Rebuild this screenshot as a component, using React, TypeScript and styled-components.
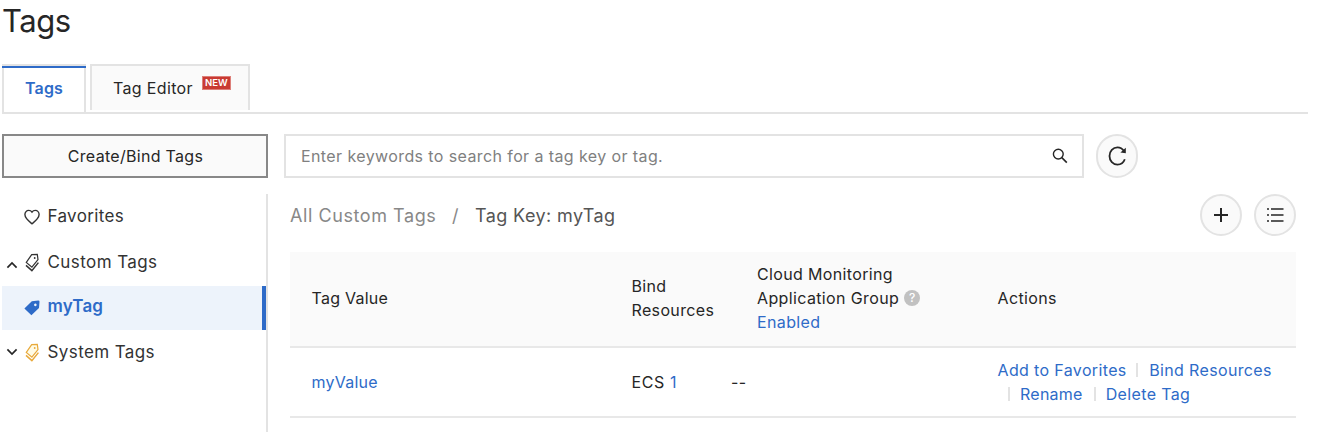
import React from "react";
import styled, { createGlobalStyle } from "styled-components";

const Global = createGlobalStyle`
  * { box-sizing: border-box; }
  body {
    margin: 0;
    background: #fff;
    color: #262626;
    font-family: Inter, "Liberation Sans", sans-serif;
    font-size: 16px;
    line-height: 24px;
    overflow: hidden;
  }
`;

const Page = styled.main`
  width: 1324px;
  height: 432px;
  padding: 0 16px 0 2px;
  display: flex;
  flex-direction: column;
  overflow: hidden;
`;

const Txt = styled.span<{ $ls?: number }>`
  letter-spacing: ${(p) => p.$ls ?? 0.35}px;
  white-space: nowrap;
`;

const Title = styled.h1`
  margin: 0;
  height: 64px;
  padding-top: 1px;
  font-size: 31px;
  line-height: 40px;
  font-weight: 400;
  letter-spacing: -0.5px;
`;

const TabBar = styled.nav`
  display: flex;
  gap: 4px;
  height: 50px;
  border-bottom: 2px solid #e3e3e3;
`;

const Tab = styled.div<{ $active?: boolean }>`
  position: relative;
  display: flex;
  align-items: center;
  justify-content: ${(p) => (p.$active ? "center" : "flex-start")};
  width: ${(p) => (p.$active ? 84 : 160)}px;
  height: ${(p) => (p.$active ? 48 : 46)}px;
  padding: ${(p) => (p.$active ? "0 0 2px" : "0 0 0 21px")};
  border: 2px solid #e3e3e3;
  border-bottom: 0;
  background: ${(p) => (p.$active ? "#fff" : "#fafafa")};
  color: ${(p) => (p.$active ? "#2e6bc8" : "#262626")};
  font-weight: ${(p) => (p.$active ? 600 : 400)};

  &::before {
    content: "";
    display: ${(p) => (p.$active ? "block" : "none")};
    position: absolute;
    top: 0;
    left: -2px;
    right: -2px;
    height: 2px;
    background: #2e6bc8;
  }
`;

const NewBadge = styled.span`
  width: 29px;
  height: 14px;
  margin: -10px 0 0 9px;
  background: #c93a32;
  border: 1px solid #dd7f79;
  color: #fff;
  font-size: 9.5px;
  line-height: 12px;
  font-weight: 600;
  text-align: center;
`;

const Toolbar = styled.div`
  display: flex;
  margin-top: 20px;
  height: 44px;
`;

const CreateButton = styled.button`
  width: 266px;
  height: 44px;
  padding: 0 0 0 1px;
  border: 2px solid #888;
  background: #fafafa;
  color: #262626;
  font: inherit;
`;

const SearchBox = styled.div`
  display: flex;
  align-items: center;
  justify-content: space-between;
  width: 800px;
  margin: 0 12px 0 16px;
  padding: 0 14px 0 15px;
  border: 2px solid #e3e3e3;
  color: #808080;
`;

const RoundButton = styled.button<{ $h?: number }>`
  display: flex;
  align-items: center;
  justify-content: center;
  width: 42px;
  height: ${(p) => p.$h ?? 42}px;
  padding: 0;
  border: 2px solid #e3e3e3;
  border-radius: 22px;
  background: #fafafa;
  color: #262626;
`;

const Body = styled.div`
  display: flex;
  flex: 1;
  margin-top: 16px;
`;

const Sidebar = styled.aside`
  display: flex;
  flex-direction: column;
  gap: 2px;
  width: 266px;
  border-right: 2px solid #e3e3e3;
`;

const NavItem = styled.div<{ $active?: boolean; $up?: number }>`
  display: flex;
  align-items: center;
  height: 44px;
  padding-bottom: ${(p) => p.$up ?? 0}px;
  font-size: 17px;
  color: ${(p) => (p.$active ? "#2e6bc8" : "#333")};
  font-weight: ${(p) => (p.$active ? 600 : 400)};
  background: ${(p) => (p.$active ? "#edf3fb" : "transparent")};
  border-right: ${(p) => (p.$active ? "4px solid #2e6bc8" : "0")};
`;

const Slot = styled.span<{ $w: number; $top?: number }>`
  display: flex;
  width: ${(p) => p.$w}px;
  padding-top: ${(p) => p.$top ?? 0}px;
  justify-content: center;
`;

const Content = styled.section`
  width: 1006px;
  margin-left: 22px;
`;

const ContentHead = styled.div`
  display: flex;
  align-items: center;
  height: 42px;
  margin-bottom: 16px;
`;

const Crumbs = styled.div`
  display: flex;
  flex: 1;
  padding-top: 2px;
  font-size: 18px;
`;

const Crumb = styled(Txt)<{ $muted?: boolean; $w?: number }>`
  width: ${(p) => (p.$w ? `${p.$w}px` : "auto")};
  color: ${(p) => (p.$muted ? "#888" : "#555")};
`;

const Actions = styled.div`
  display: flex;
  gap: 12px;
`;

const TableRow = styled.div<{ $head?: boolean }>`
  display: grid;
  grid-template-columns: ${(p) => (p.$head ? "320px 125.5px 240.5px 1fr" : "320px 99.5px 266.5px 1fr")};
  align-items: center;
  height: ${(p) => (p.$head ? 96 : 70)}px;
  padding: 0 0 ${(p) => (p.$head ? 2 : 0)}px 21.5px;
  border-bottom: 2px solid #e8e8e8;
  background: ${(p) => (p.$head ? "#fafafa" : "#fff")};
`;

const Cell = styled.div`
  display: flex;
  flex-direction: column;
`;

const Line = styled.div<{ $indent?: number }>`
  display: flex;
  align-items: center;
  height: 24px;
  padding-left: ${(p) => p.$indent ?? 0}px;
`;

const Link = styled.a<{ $ls?: number }>`
  color: #2e6bc8;
  letter-spacing: ${(p) => p.$ls ?? 0.36}px;
  white-space: nowrap;
`;

const Divider = styled.i<{ $l: number; $r: number }>`
  width: 2px;
  height: 14px;
  margin: 0 ${(p) => p.$r}px 0 ${(p) => p.$l}px;
  background: #e3e3e3;
`;

const Help = styled.span`
  width: 16px;
  height: 16px;
  margin-left: 5px;
  border-radius: 50%;
  background: #c1c1c1;
  color: #fff;
  font-size: 12px;
  line-height: 16px;
  font-weight: 500;
  text-align: center;
`;

const TagsIcon = ({ color, fill = "none" }: { color: string; fill?: string }) => (
  <svg width="16" height="20" viewBox="0 0 16 20" fill="none" stroke={color} strokeLinejoin="miter">
    <path d="M2.3 9.4 7.7 1.7 13.3 1.3 14 6.6 7.9 14.2Z" fill={fill} strokeWidth="1.2" />
    <path d="M2 12.4 7.9 17.6 14.4 9.6" strokeWidth="1.5" />
    <circle cx="10.7" cy="5" r=".9" fill={color} stroke="none" />
  </svg>
);

const Chevron = ({ up }: { up?: boolean }) => (
  <svg width="12" height="8" viewBox="0 0 12 8" fill="none" stroke="#262626" strokeWidth="1.7">
    <path d={up ? "M1.4 6.6 6 2 10.6 6.6" : "M1.4 1.4 6 6 10.6 1.4"} />
  </svg>
);

export default function App() {
  return (
    <Page>
      <Global />
      <Title>Tags</Title>
      <TabBar>
        <Tab $active><Txt $ls={0.15}>Tags</Txt></Tab>
        <Tab><Txt>Tag Editor</Txt><NewBadge>NEW</NewBadge></Tab>
      </TabBar>
      <Toolbar>
        <CreateButton><Txt $ls={0.3}>Create/Bind Tags</Txt></CreateButton>
        <SearchBox>
          <Txt $ls={0.4}>Enter keywords to search for a tag key or tag.</Txt>
          <svg width="16" height="16" viewBox="0 0 16 16" fill="none" stroke="#262626" strokeWidth="1.4">
            <circle cx="6.3" cy="6.1" r="4.9" />
            <path d="M9.8 9.6 14.8 14.6" strokeWidth="1.6" />
          </svg>
        </SearchBox>
        <RoundButton $h={44}>
          <svg width="20" height="22" viewBox="0 0 20 22" fill="none" stroke="#262626" strokeWidth="1.8">
            <path d="M17.8 14.3C16.6 17.6 13.8 19.6 10.5 19.6 6 19.6 2.5 15.8 2.5 11S6 2.4 10.5 2.4C13.1 2.4 15.4 3.7 16.8 5.8" />
            <path d="M18.8 2.8V8.2L13.4 7.4Z" fill="#262626" stroke="none" />
          </svg>
        </RoundButton>
      </Toolbar>
      <Body>
        <Sidebar>
          <NavItem>
            <Slot $w={22} />
            <Slot $w={16} $top={2}>
              <svg width="16" height="16" viewBox="0 0 16 16" fill="none" stroke="#333" strokeWidth="1.4">
                <path d="M8 14.8C5 12.4.9 9.4.9 5.6.9 3.2 2.6 1.4 4.7 1.4 6.2 1.4 7.4 2.2 8 3.1 8.6 2.2 9.8 1.4 11.3 1.4c2.1 0 3.8 1.8 3.8 4.2 0 3.8-4.1 6.8-7.1 9.2Z" />
              </svg>
            </Slot>
            <Slot $w={7.5} />
            <Txt>Favorites</Txt>
          </NavItem>
          <NavItem>
            <Slot $w={20} $top={5}><Chevron up /></Slot>
            <Slot $w={20} $top={1}><TagsIcon color="#333" /></Slot>
            <Slot $w={5.5} />
            <Txt $ls={0.42}>Custom Tags</Txt>
          </NavItem>
          <NavItem $active $up={4}>
            <Slot $w={22} />
            <Slot $w={16} $top={4}>
              <svg width="16" height="16" viewBox="0 0 16 16">
                <path fillRule="evenodd" fill="#2e6bc8" d="M.4 8.6 7.8 1.2 14.3.5Q15.6.5 15.5 1.8L15 8 7.4 15.3ZM11.3 3.6a1.3 1.3 0 1 0 .1 0Z" />
              </svg>
            </Slot>
            <Slot $w={7.5} />
            <Txt $ls={0.15}>myTag</Txt>
          </NavItem>
          <NavItem $up={4}>
            <Slot $w={20}><Chevron /></Slot>
            <Slot $w={20} $top={1}><TagsIcon color="#e8a93a" fill="#fffbe6" /></Slot>
            <Slot $w={5.5} />
            <Txt $ls={0.4}>System Tags</Txt>
          </NavItem>
        </Sidebar>
        <Content>
          <ContentHead>
            <Crumbs>
              <Crumb $muted $w={162} $ls={0.57}>All Custom Tags</Crumb>
              <Crumb $muted $w={23}>/</Crumb>
              <Crumb $ls={0.4}>Tag Key: myTag</Crumb>
            </Crumbs>
            <Actions>
              <RoundButton>
                <svg width="14" height="14" viewBox="0 0 14 14" stroke="#262626" strokeWidth="2"><path d="M7 0V14M0 7H14" /></svg>
              </RoundButton>
              <RoundButton>
                <svg width="18" height="14" viewBox="0 0 18 14" stroke="#262626" strokeWidth="1.4"><path d="M1 1H3M5 1H17.5M1 7H3M5 7H17.5M1 13H3M5 13H17.5" /></svg>
              </RoundButton>
            </Actions>
          </ContentHead>
          <TableRow $head>
            <Cell><Line><Txt $ls={0.25}>Tag Value</Txt></Line></Cell>
            <Cell><Line><Txt>Bind</Txt></Line><Line><Txt>Resources</Txt></Line></Cell>
            <Cell>
              <Line><Txt>Cloud Monitoring</Txt></Line>
              <Line><Txt $ls={0.37}>Application Group</Txt><Help>?</Help></Line>
              <Line><Link>Enabled</Link></Line>
            </Cell>
            <Cell><Line><Txt>Actions</Txt></Line></Cell>
          </TableRow>
          <TableRow>
            <Cell><Line><Link $ls={0.25}>myValue</Link></Line></Cell>
            <Cell><Line><Txt $ls={0.6}>ECS&nbsp;</Txt><Link>1</Link></Line></Cell>
            <Cell><Line><Txt>--</Txt></Line></Cell>
            <Cell>
              <Line><Link>Add to Favorites</Link><Divider $l={9.5} $r={11} /><Link>Bind Resources</Link></Line>
              <Line $indent={10}><Divider $l={0} $r={10.5} /><Link $ls={0.25}>Rename</Link><Divider $l={11.5} $r={9.5} /><Link>Delete Tag</Link></Line>
            </Cell>
          </TableRow>
        </Content>
      </Body>
    </Page>
  );
}
